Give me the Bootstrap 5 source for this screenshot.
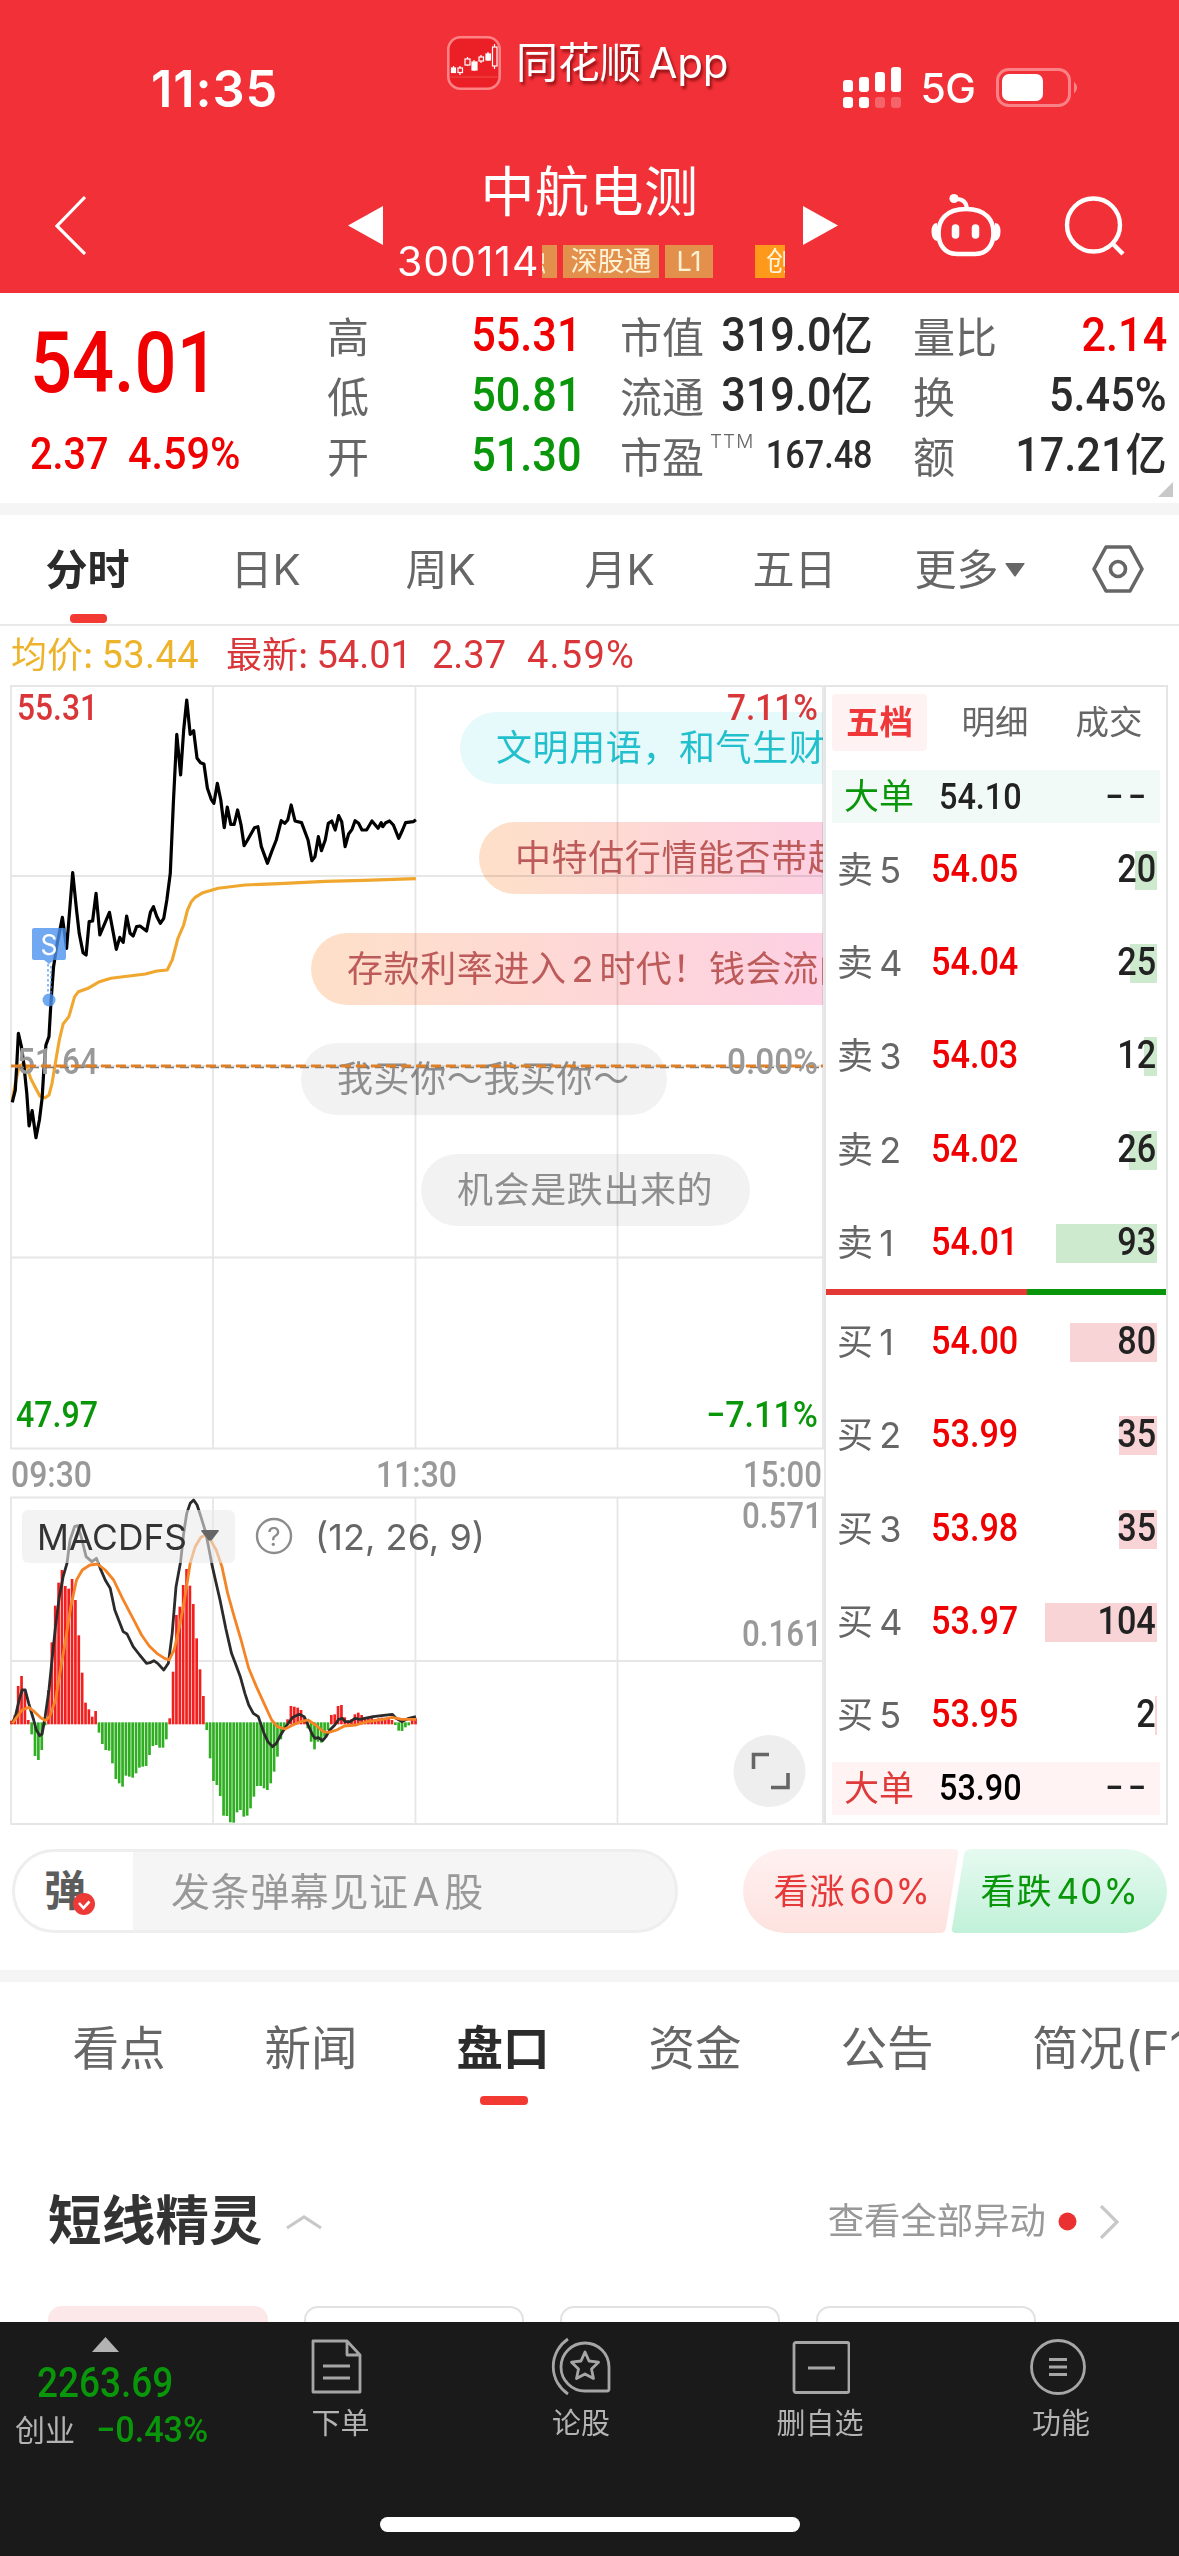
<!DOCTYPE html>
<html lang="zh-CN">
<head>
<meta charset="utf-8">
<meta name="viewport" content="width=device-width, initial-scale=1">
<title>中航电测 300114</title>
<link href="https://cdn.jsdelivr.net/npm/bootstrap@5.3.0/dist/css/bootstrap.min.css" rel="stylesheet">
<style>
:root{--up:#d9363a;--dn:#0a960a;--ink:#333;--sub:#666;--pale:#999}
body{width:1179px;height:2556px;overflow:hidden;background:#fff;color:var(--ink);font-family:Inter,"Noto Sans CJK SC",sans-serif;line-height:1}
svg{display:block;flex:none}
.num{font-family:Roboto,"Noto Sans CJK SC",sans-serif;font-weight:500;display:inline-block;transform:scaleX(.9);transform-origin:left center;white-space:nowrap}
.num.end{transform-origin:right center}
.c-up{color:#f00000}.c-dn{color:var(--dn)}.c-sub{color:var(--sub)}.c-ink{color:#2b2b2b}
.band{height:12px;background:#f5f5f5}

.topbar{height:293px;background:#f23037;color:#fff}
.status{height:164px}
.clock{margin:64px 0 0 151px;width:130px;font-size:50.5px;font-weight:600;letter-spacing:.9px}
.brand{margin:36px 0 0 166px;font-size:42px;text-shadow:2px 3px 3px rgba(90,0,0,.65);letter-spacing:-.2px}
.signal{margin:66px 0 0 117px}
.netw{margin:68px 0 0 17px;font-size:41px;width:58px;font-weight:500;letter-spacing:-.5px}
.batt{margin:67px 0 0 18px}
.navrow{height:122px;padding-left:55px}
.stockbox{width:385px;margin:0 18px 0 17px}
.stockname{font-size:54px;height:60px;line-height:58px;letter-spacing:.5px;margin-left:-6px}
.coderow{height:33px;margin-top:21px}
.code{font-size:41px;width:145px;margin-left:-3px;letter-spacing:.9px;white-space:nowrap}
.tagx{height:33px;line-height:33px;background:#e2904c;color:#fff3d6;font-size:27px;overflow:hidden;white-space:nowrap}

.quote{height:210px;position:relative}
.bigp{padding:34px 0 0 30px;width:329px}
.bigp .p1{font-size:86px;height:96px;line-height:72px;transform:scaleX(.86)}
.bigp .p2{font-size:44px;margin-top:9px;line-height:44px}
.qcol{padding-top:15px}
.qcol>div{height:60px;font-size:42px}
.qcol .num{font-size:48px;transform:translateY(-3px) scaleX(.9)}
.qcol .yi{font-size:42px;font-weight:500;transform:translateY(-3px) scale(.98,1.08);display:inline-block}

.ktabs{height:111px;border-bottom:2px solid #e9e9e9;font-size:42px;color:var(--sub);position:relative}
.ktabs>span{width:175px;flex:none;height:109px;line-height:109px}
.ktabs .on,.ntabs .on{color:#2b2b2b;font-weight:700}
.uline{position:absolute;height:9px;border-radius:4px;background:#f23a33}

.info{height:59px;font-size:36px;padding:0 0 1px 11px;color:var(--up)}
.info .num{font-size:38px;font-weight:400;transform:none}
.board{height:1140px}
.plot{width:824px;position:relative}
.bullet{position:absolute;height:72px;line-height:73px;border-radius:36px 0 0 36px;font-size:36px;letter-spacing:.6px;white-space:nowrap;overflow:hidden;padding-left:36px;mix-blend-mode:multiply}
.warm{background:linear-gradient(90deg,#fee0c8,#fdd0e3);color:#bd5b5b}
.gray{background:#f2f2f2;color:#8e8e8e;border-radius:36px}

.book{width:344px;border:2px solid #e5e5e5}
.btabs{height:83px;padding:7px 0 0 6px;font-size:33.5px;color:var(--sub)}
.btabs>span{width:115px;height:57px;line-height:57px;text-align:center}
.btabs .on{width:96px;background:#fef2f2;color:#f0383a;font-weight:700;border-radius:4px}
.big{height:53px;margin:0 6px;padding:0 15px 0 12px;font-size:35px}
.big .num{font-size:36px;color:#222}
.lv{height:93.3px;padding:0 10px 0 11px;font-size:36px;color:var(--sub);position:relative}
.lv .tag2{width:94px;word-spacing:-4px}
.lv .num{font-size:38px;position:relative;top:-1px}
.lv .qty{color:#222}
.lv i{position:absolute;right:9px;top:calc(50% - 19px);height:39px;background:#cde9ce}
.lv.buy i{background:#f8d4d7}
.split{height:6px}

.comment{height:145px;padding:24px 12px 0}
.sendbox{width:667px;height:84px;border:3px solid #eee;border-radius:42px;background:#f5f5f5;overflow:hidden;font-size:39px;color:var(--pale)}
.dan{width:118px;height:78px;background:#fff;color:#5c5c5c;font-weight:700;font-size:42px;position:relative;padding-left:29px}
.dan svg{position:absolute;left:57px;top:40px}
.vote{width:424px;height:84px;position:relative;margin-left:65px;font-size:35px}
.vote svg{position:absolute;left:0;top:0}
.vote span{position:relative;white-space:nowrap;letter-spacing:1.1px}

.ntabs{height:140px;font-size:46.5px;color:var(--sub);position:relative;padding-left:23px}
.ntabs>span{width:192px;flex:none;height:132px;line-height:132px;text-align:center;white-space:nowrap}
.sect{height:184px;padding:15px 60px 0 48px}
.sect h2{font-size:53.5px;font-weight:700;margin:0;letter-spacing:.2px}
.more{font-size:36.4px;color:var(--pale)}
.tiles{height:16px;padding-left:48px;gap:36px;overflow:hidden}
.tile{width:220px;height:80px;border:2px solid #e2e2e2;border-radius:14px}
.tile.on{background:#fce8e9;border-color:#fce8e9}

.dock{height:234px;background:#1a1a1a;color:#b3b3b3;position:relative}
.idx{width:240px;padding-top:15px}
.cell{width:240px;height:130px;font-size:29px;position:absolute;top:0;padding-top:14px}
.cell svg{height:60px}
.cell span{margin-top:13px}
.homebar{position:absolute;left:380px;top:195px;width:420px;height:15px;border-radius:8px;background:#fff}
</style>
</head>
<body>
<header class="topbar">
  <div class="status d-flex align-items-start">
    <div class="clock">11:35</div>
    <div class="brand d-flex align-items-center">
      <svg width="54" height="54" viewBox="0 0 54 54"><rect x="1.3" y="1.3" width="51.4" height="51.4" rx="12" fill="#ea2026" stroke="#ff8285" stroke-width="2.6"/><path d="M3 41h48" stroke="#f4484b" stroke-width="1"/><g stroke="#fff" stroke-width="1.2" fill="none"><path d="M6.500 30v7M13 30v9M20.500 21v9M27 24v11M34 19v8M41 16v9M47.500 8v25"/><g fill="#fff"><rect x="4.500" y="32" width="4" height="4.500"/><rect x="25" y="26" width="5" height="8"/><rect x="39" y="18" width="4.500" height="6"/></g><g fill="#ea2026"><rect x="11" y="32" width="4.500" height="4.500"/><rect x="18" y="23" width="5" height="6"/><rect x="32" y="21" width="4.500" height="4"/><rect x="45.500" y="11" width="4.500" height="19"/></g></g></svg>
      <span style="margin-left:15px">同花顺</span><span style="margin-left:7px;width:78px">App</span>
    </div>
    <svg class="signal" width="60" height="42" viewBox="0 0 60 42" fill="#fff"><rect x="0" y="14" width="10" height="12" rx="3"/><rect x="16" y="11" width="10" height="15" rx="3"/><rect x="32" y="6" width="10" height="20" rx="3"/><rect x="48" y="1" width="10" height="25" rx="3"/><rect x="0" y="31" width="10" height="11" rx="3"/><rect x="16" y="31" width="10" height="11" rx="3"/><rect x="32" y="31" width="10" height="11" rx="3" opacity=".25"/><rect x="48" y="31" width="10" height="11" rx="3" opacity=".25"/></svg>
    <div class="netw">5G</div>
    <svg class="batt" width="84" height="41" viewBox="0 0 84 41"><rect x="1.500" y="2.500" width="72" height="36" rx="11" fill="none" stroke="#f98286" stroke-width="3"/><rect x="6" y="7" width="41" height="27" rx="7" fill="#fff"/><path d="M78 14.500q6 6 0 12z" fill="#f98286"/></svg>
  </div>
  <div class="navrow d-flex align-items-center">
    <svg width="31" height="60" viewBox="0 0 31 60"><path d="M30 2L2 31l28 28" fill="none" stroke="#fff" stroke-width="3.200"/></svg>
    <svg style="margin-left:262px" width="35" height="39" viewBox="0 0 35 39"><path d="M0 19.500L35 0v39z" fill="#fff"/></svg>
    <div class="stockbox align-self-start">
      <div class="stockname text-center">中航电测</div>
      <div class="coderow d-flex align-items-center">
        <span class="code">300114</span>
        <span class="tagx" style="width:15px;text-indent:-23px">融</span>
        <span class="tagx text-center" style="width:96px;margin-left:6px">深股通</span>
        <span class="tagx text-center" style="width:48px;margin-left:6px">L1</span>
        <span class="tagx" style="width:30px;margin-left:42px;padding-left:11px;background:#ff991b">创</span>
      </div>
    </div>
    <svg width="35" height="39" viewBox="0 0 35 39"><path d="M35 19.500L0 0v39z" fill="#fff"/></svg>
    <svg style="margin-left:93px" width="70" height="66" viewBox="0 0 70 66" fill="none" stroke="#fff" stroke-width="4.600"><path d="M35 17C14 17 7.500 29 7.500 41S14 62 26 62h18c12 0 18.500-9 18.500-21S56 17 35 17z"/><path d="M25 7c8 0 11 4 11 11" stroke-width="4"/><circle cx="23" cy="6.500" r="4.600" fill="#fff" stroke="none"/><path d="M6 31q-5.500 0-5.500 8.500T6 49zM64 31q5.500 0 5.500 8.500T64 49z" fill="#fff" stroke="none"/><path d="M24.500 36v7M44.500 36v7" stroke-width="7.500" stroke-linecap="round"/></svg>
    <svg style="margin-left:63px" width="62" height="62" viewBox="0 0 62 62" fill="none" stroke="#fff" stroke-width="4.400"><circle cx="29.500" cy="31" r="26.500"/><path d="M48 49l11 11"/></svg>
  </div>
</header>

<section class="quote d-flex">
  <div class="bigp c-up">
    <div class="num p1">54.01</div>
    <div class="p2 d-flex"><span class="num" style="width:98px">2.37</span><span class="num" style="transform:scaleX(.94)">4.59%</span></div>
  </div>
  <div class="qcol c-sub" style="width:254px;margin-left:-2px">
    <div class="d-flex justify-content-between align-items-center">高<span class="num end c-up">55.31</span></div>
    <div class="d-flex justify-content-between align-items-center">低<span class="num end c-dn">50.81</span></div>
    <div class="d-flex justify-content-between align-items-center">开<span class="num end c-dn">51.30</span></div>
  </div>
  <div class="qcol c-sub" style="width:253px;margin-left:39px">
    <div class="d-flex justify-content-between align-items-center">市值<span class="c-ink d-flex align-items-center"><span class="num end">319.0</span><span class="yi">亿</span></span></div>
    <div class="d-flex justify-content-between align-items-center">流通<span class="c-ink d-flex align-items-center"><span class="num end">319.0</span><span class="yi">亿</span></span></div>
    <div class="d-flex justify-content-between align-items-center"><span>市盈</span><span class="align-self-start me-auto" style="font-size:19px;margin:4px 0 0 6px;font-weight:300;letter-spacing:1px">TTM</span><span class="num end c-ink" style="font-size:38px">167.48</span></div>
  </div>
  <div class="qcol c-sub" style="width:254px;margin-left:40px">
    <div class="d-flex justify-content-between align-items-center">量比<span class="num end c-up">2.14</span></div>
    <div class="d-flex justify-content-between align-items-center">换<span class="num end c-ink">5.45%</span></div>
    <div class="d-flex justify-content-between align-items-center">额<span class="c-ink d-flex align-items-center"><span class="num end">17.21</span><span class="yi">亿</span></span></div>
  </div>
  <svg class="position-absolute" style="right:6px;bottom:6px" width="15" height="15"><path d="M15 0v15H0z" fill="#c8c8c8"/></svg>
</section>
<div class="band"></div>

<nav class="ktabs d-flex">
  <span class="on text-center">分时</span>
  <span class="text-center" style="margin-left:3px">日K</span>
  <span class="text-center">周K</span>
  <span class="text-center" style="margin-left:4px">月K</span>
  <span class="text-center">五日</span>
  <span class="d-flex align-items-center justify-content-center">更多<svg style="margin-left:6px" width="20" height="14"><path d="M1 0h18q1 0 .5 1L10.500 13.500h-1L.5 1Q0 0 1 0z" fill="#666"/></svg></span>
  <svg style="margin:30px 0 0 35px" width="52" height="48" viewBox="0 0 52 48" fill="none" stroke="#666" stroke-width="3.600" stroke-linejoin="round"><path d="M14 2h24l12 22-12 22H14L2 24z"/><circle cx="26" cy="24" r="7.500"/></svg>
  <div class="uline" style="left:70px;bottom:1px;width:37px"></div>
</nav>

<div class="info d-flex align-items-center">
  <span style="color:#edb32a;width:215px">均价: <span class="num" style="margin-left:-2px;letter-spacing:.4px">53.44</span></span>
  <span>最新: <span class="num" style="margin-left:-2px">54.01</span></span>
  <span class="num" style="margin-left:20px">2.37</span>
  <span class="num" style="margin-left:21px;letter-spacing:1.2px">4.59%</span>
</div>

<main class="board d-flex">
  <div class="plot">
    <svg width="824" height="1140" viewBox="0 685 824 1140" font-family="Roboto" font-weight="500" font-size="36">
      <g stroke="#e6e6e6" stroke-width="1.800" fill="none">
        <path d="M11 686H823V1448.500H11zM11 876H823M11 1066H823M11 1257.500H823M213 686V1448M415.500 686V1448M617.500 686V1448"/>
        <path d="M11 1497.500H823V1824H11zM11 1661H823M213 1498V1824M415.500 1498V1824M617.500 1498V1824"/>
      </g>
      <g transform="translate(0 670) scale(.38265 .33333)" fill="none" stroke-linejoin="round">
        <polyline vector-effect="non-scaling-stroke" stroke="#f0a72f" stroke-width="3.100" points="32,1290 40,1240 50,1190 62,1180 72,1195 80,1225 92,1252 104,1278 118,1283 128,1275 136,1240 146,1170 155,1110 165,1062 180,1040 195,980 205,965 230,955 260,935 290,925 380,912 410,903 437,900 450,870 465,805 480,765 490,720 500,695 510,682 530,668 570,655 640,645 730,641 850,634 950,631 1087,626"/>
        <polyline vector-effect="non-scaling-stroke" stroke="#000" stroke-width="3.200" points="32,1297 40,1260 44,1180 48,1090 56,1130 62,1180 70,1270 76,1368 84,1322 94,1403 103,1350 110,1285 114,1210 120,1125 128,1100 133,1000 140,890 148,830 163,742 174,835 190,608 200,720 207,790 217,848 225,855 233,755 242,753 251,670 261,795 286,727 304,838 313,802 322,817 331,738 340,790 348,798 357,770 366,768 383,783 393,727 401,710 410,740 419,760 428,745 436,690 445,610 453,400 462,193 472,315 480,180 488,90 497,193 506,182 515,265 524,278 533,282 542,355 552,388 559,400 568,340 577,390 586,473 594,411 603,463 612,463 621,420 630,465 638,527 647,510 665,473 674,470 683,530 699,580 710,545 722,510 735,452 744,460 752,450 761,405 771,453 788,458 805,510 815,572 823,560 832,500 840,542 850,510 858,460 867,453 876,480 885,437 893,455 902,530 911,492 920,478 928,452 937,460 946,480 958,480 972,453 988,475 996,458 1000,470 1008,458 1018,453 1028,465 1042,505 1052,480 1060,458 1080,455 1087,449"/>
      </g>
      <g fill="#4d94ee" opacity=".8"><path d="M34 928h30q2 0 2 2v28q0 2-2 2H54l-5 4-5-4H34q-2 0-2-2v-28q0-2 2-2z"/><circle cx="49" cy="1000" r="6.500"/><path d="M48 964v30M51 966v28" stroke="#4d94ee" stroke-width="1.600" stroke-dasharray="2.500 2.500"/></g>
      <text x="40.500" y="955" font-size="28" fill="#fff" font-family="Inter" font-weight="400" textLength="17" lengthAdjust="spacingAndGlyphs">S</text>
      <text x="17" y="720" fill="#d9363a" textLength="81" lengthAdjust="spacingAndGlyphs">55.31</text>
      <text x="17" y="1073.500" fill="#999" textLength="81" lengthAdjust="spacingAndGlyphs">51.64</text>
      <text x="16" y="1427" fill="#0a960a" textLength="82" lengthAdjust="spacingAndGlyphs">47.97</text>
      <text x="706" y="1427" fill="#0a960a" textLength="112" lengthAdjust="spacingAndGlyphs">−7.11%</text>
      <g fill="#999">
        <text x="11" y="1487" textLength="81" lengthAdjust="spacingAndGlyphs">09:30</text>
        <text x="376" y="1487" textLength="81" lengthAdjust="spacingAndGlyphs">11:30</text>
        <text x="743" y="1487" textLength="79" lengthAdjust="spacingAndGlyphs">15:00</text>
        <text x="742" y="1528" textLength="80" lengthAdjust="spacingAndGlyphs">0.571</text>
        <text x="742" y="1646" textLength="80" lengthAdjust="spacingAndGlyphs">0.161</text>
      </g>
      <g id="bars" transform="translate(0 1380) scale(.38265 .33333)"></g>
      <g transform="translate(0 1380) scale(.38265 .33333)" fill="none" stroke-width="2.800" stroke-linejoin="round">
        <polyline vector-effect="non-scaling-stroke" stroke="#2b2b2b" points="32,1030 40,1010 50,960 58,930 66,930 75,970 88,1020 95,1050 104,1067 110,1062 118,1010 128,930 135,850 145,740 155,650 165,590 175,550 183,480 195,440 203,437 212,470 225,530 240,545 252,535 262,565 275,600 288,625 300,690 322,755 332,762 348,800 365,825 383,850 392,848 402,842 412,850 428,870 440,850 450,760 460,620 472,545 480,460 488,400 497,370 506,360 515,375 525,410 537,455 545,500 555,560 565,610 575,660 590,745 605,820 615,850 628,890 640,940 650,975 662,1000 675,1010 690,1060 700,1085 712,1100 722,1090 735,1062 750,1035 765,1012 782,1003 795,1010 805,1035 817,1065 823,1075 832,1073 843,1082 852,1070 862,1050 875,1035 885,1018 895,1015 902,1025 915,1025 928,1015 940,1018 975,1010 1025,1003 1035,1015 1050,1025 1068,1015 1087,1010"/>
        <polyline vector-effect="non-scaling-stroke" stroke="#f58426" points="32,1030 45,1010 58,990 75,982 90,995 105,1012 118,1022 130,1010 145,960 158,870 170,790 185,680 200,600 215,570 235,555 255,552 275,570 297,600 320,655 345,710 370,765 390,798 410,820 430,835 442,840 455,810 470,735 485,640 497,550 510,500 525,472 537,465 550,480 565,510 580,560 595,640 612,710 630,780 650,865 670,920 690,970 710,1020 725,1040 745,1047 765,1035 785,1025 805,1020 825,1035 845,1055 860,1057 880,1050 900,1038 930,1035 960,1025 1000,1018 1025,1012 1050,1018 1087,1018"/>
      </g>
      <rect x="22" y="1510" width="213" height="53" rx="6" fill="#ebebeb" opacity=".58"/>
      <g font-family="Inter" font-weight="400">
        <text x="37" y="1550" fill="#333" textLength="150" lengthAdjust="spacingAndGlyphs">MACDFS</text>
        <path d="M202 1530h16q1.500 0 .5 1.500l-7 9h-3l-7-9q-1-1.500.5-1.500z" fill="#666"/>
        <circle cx="274" cy="1536" r="17" fill="none" stroke="#8c8c8c" stroke-width="2.400"/>
        <text x="274" y="1545.500" font-size="26" fill="#8c8c8c" text-anchor="middle">?</text>
        <text x="315" y="1550" fill="#666" textLength="170" lengthAdjust="spacing">(12, 26, 9)</text>
      </g>
      <circle cx="769.500" cy="1771" r="36" fill="#eee"/>
      <path d="M753.500 1769V1754.500H769M788 1773V1787.500H771" fill="none" stroke="#666" stroke-width="3.600"/>
    </svg>
    <div class="bullet" style="left:460px;top:27px;width:363px;background:#e6f9fb;color:#22c0cc">文明用语，和气生财</div>
    <div class="bullet warm" style="left:479px;top:137px;width:344px">中特估行情能否带起</div>
    <div class="bullet warm" style="left:311px;top:248px;width:512px">存款利率进入<span style="margin:0 5px">2</span>时代！钱会流向</div>
    <div class="bullet gray" style="left:301px;top:358px;width:366px">我买你～我买你～</div>
    <div class="bullet gray" style="left:421px;top:469px;width:329px">机会是跌出来的</div>
    <svg class="position-absolute top-0 start-0" width="824" height="400" viewBox="0 685 824 400" font-family="Roboto" font-weight="500" font-size="36">
      <text x="727" y="720" fill="#d9363a" textLength="91" lengthAdjust="spacingAndGlyphs">7.11%</text>
      <path d="M11 1067.500H823" stroke="#777" stroke-width="1.600" stroke-dasharray="9 6" stroke-dashoffset="-4"/>
      <path d="M11 1066H823" stroke="#e07f24" stroke-width="2.800" stroke-dasharray="10 5"/>
      <text x="727" y="1073.500" fill="#999" textLength="91" lengthAdjust="spacingAndGlyphs">0.00%</text>
    </svg>
  </div>

  <aside class="book">
    <div class="btabs d-flex"><span class="on">五档</span><span style="margin-left:11px">明细</span><span>成交</span></div>
    <div class="big d-flex align-items-center c-dn" style="background:#f1faf6">大单<span class="num" style="margin-left:25px">54.10</span><span class="num end ms-auto" style="letter-spacing:5px;margin-right:-5px">−−</span></div>
    <div class="lv d-flex align-items-center"><span class="tag2">卖 5</span><span class="num c-up">54.05</span><i style="width:22px"></i><span class="num end qty ms-auto">20</span></div>
    <div class="lv d-flex align-items-center"><span class="tag2">卖 4</span><span class="num c-up">54.04</span><i style="width:27px"></i><span class="num end qty ms-auto">25</span></div>
    <div class="lv d-flex align-items-center"><span class="tag2">卖 3</span><span class="num c-up">54.03</span><i style="width:13px"></i><span class="num end qty ms-auto">12</span></div>
    <div class="lv d-flex align-items-center"><span class="tag2">卖 2</span><span class="num c-up">54.02</span><i style="width:28px"></i><span class="num end qty ms-auto">26</span></div>
    <div class="lv d-flex align-items-center"><span class="tag2">卖 1</span><span class="num c-up">54.01</span><i style="width:101px"></i><span class="num end qty ms-auto">93</span></div>
    <div class="split d-flex"><div style="width:59.2%;background:#e33a38"></div><div class="flex-fill" style="background:#0a960a"></div></div>
    <div class="lv buy d-flex align-items-center"><span class="tag2">买 1</span><span class="num c-up">54.00</span><i style="width:87px"></i><span class="num end qty ms-auto">80</span></div>
    <div class="lv buy d-flex align-items-center"><span class="tag2">买 2</span><span class="num c-up">53.99</span><i style="width:38px"></i><span class="num end qty ms-auto">35</span></div>
    <div class="lv buy d-flex align-items-center"><span class="tag2">买 3</span><span class="num c-up">53.98</span><i style="width:38px"></i><span class="num end qty ms-auto">35</span></div>
    <div class="lv buy d-flex align-items-center"><span class="tag2">买 4</span><span class="num c-up">53.97</span><i style="width:112px"></i><span class="num end qty ms-auto">104</span></div>
    <div class="lv buy d-flex align-items-center"><span class="tag2">买 5</span><span class="num c-up">53.95</span><i style="width:2px"></i><span class="num end qty ms-auto">2</span></div>
    <div class="big d-flex align-items-center" style="background:#fff3f3;color:#e03b3b">大单<span class="num" style="margin-left:25px;color:#000">53.90</span><span class="num end ms-auto" style="letter-spacing:5px;margin-right:-5px">−−</span></div>
  </aside>
</main>

<div class="comment d-flex">
  <div class="sendbox d-flex align-items-center">
    <div class="dan d-flex align-items-center">弹<svg width="24" height="24" viewBox="0 0 24 24"><circle cx="12" cy="12" r="11" fill="#ee3a36"/><path d="M7 11l4.500 5 6-6.500" fill="none" stroke="#fff" stroke-width="2.600"/></svg></div>
    <span style="margin-left:38px;letter-spacing:.6px">发条弹幕见证<span class="mx-1">A</span>股</span>
  </div>
  <div class="vote d-flex align-items-center">
    <svg width="424" height="84" viewBox="0 0 424 84"><defs><linearGradient id="gr" x2="0" y2="1"><stop stop-color="#fff1f1"/><stop offset="1" stop-color="#fde2df"/></linearGradient><linearGradient id="gg" x2="0" y2="1"><stop stop-color="#e6faf0"/><stop offset="1" stop-color="#c1f1d9"/></linearGradient></defs><path d="M42 0H211q5 0 4 5L203 79q-1 5-6 5H42A42 42 0 0 1 42 0z" fill="url(#gr)"/><path d="M229 0H382a42 42 0 0 1 0 84H213q-5 0-4-5L221 6q1-6 8-6z" fill="url(#gg)"/></svg>
    <span style="margin-left:30px;color:#e5393a;width:207px">看涨<span class="ms-1">60%</span></span><span class="c-dn">看跌<span class="ms-1">40%</span></span>
  </div>
</div>
<div class="band"></div>

<nav class="ntabs d-flex overflow-hidden">
  <span>看点</span><span>新闻</span><span class="on">盘口</span><span>资金</span><span>公告</span><span class="text-start" style="padding-left:49px">简况(F10)</span>
  <div class="uline" style="left:480px;top:114px;width:48px"></div>
</nav>
<section class="sect d-flex align-items-center">
  <h2>短线精灵</h2>
  <svg style="margin-left:23px" width="36" height="16" viewBox="0 0 36 16"><path d="M1 14L18 3l17 11" fill="none" stroke="#c8c8c8" stroke-width="3.200"/></svg>
  <span class="more ms-auto">查看全部异动</span>
  <svg style="margin-left:12px" width="19" height="19"><circle cx="9.500" cy="9.500" r="9" fill="#ea3030"/></svg>
  <svg style="margin-left:22px" width="20" height="34" viewBox="0 0 20 34"><path d="M2 1l16 16L2 33" fill="none" stroke="#c8c8c8" stroke-width="3.200"/></svg>
</section>
<div class="tiles d-flex"><div class="tile on"></div><div class="tile"></div><div class="tile"></div><div class="tile"></div></div>

<footer class="dock">
  <div class="idx">
    <svg style="margin-left:92px" width="27" height="15"><path d="M13.500 0L27 15H0z" fill="#b3b3b3"/></svg>
    <div class="c-dn" style="font-size:43px;padding:8px 0 0 37px"><span class="num" style="transform:scaleX(.86)">2263.69</span></div>
    <div class="d-flex align-items-center" style="font-size:30px;padding:8px 0 0 15px">创业<span class="num c-dn" style="font-size:36px;margin-left:21px;transform:scaleX(.95)">−0.43%</span></div>
  </div>
  <div class="cell d-flex flex-column align-items-center" style="left:218px"><svg width="56" viewBox="0 0 56 60" fill="none" stroke="#a6a6a6" stroke-width="2.800" stroke-linejoin="round"><path d="M3 5h34l13 14v37H3zM37 5v14h13"/><path d="M13 30h27M13 42h27" stroke-width="3"/></svg><span style="margin-left:5px">下单</span></div>
  <div class="cell d-flex flex-column align-items-center" style="left:461px"><svg width="64" viewBox="0 0 64 60" fill="none" stroke="#a6a6a6" stroke-width="2.800" stroke-linejoin="round"><path d="M36 7a24 24 0 0 0 0 48h22q2 0 2-2V31A24 24 0 0 0 36 7z"/><path d="M19 3A33 33 0 0 0 19 58"/><path d="M36 16l4 9 9.500 1.200-7 6.800 2 9.500-8.500-4.500-8.500 4.500 2-9.500-7-6.800L32 25z"/></svg><span>论股</span></div>
  <div class="cell d-flex flex-column align-items-center" style="left:700px"><svg width="60" viewBox="0 0 60 60" fill="none" stroke="#a6a6a6" stroke-width="2.800"><rect x="4" y="6.500" width="55" height="50" rx="2"/><path d="M18 32h27" stroke-width="3"/></svg><span>删自选</span></div>
  <div class="cell d-flex flex-column align-items-center" style="left:940px"><svg width="60" viewBox="0 0 60 60" fill="none" stroke="#a6a6a6" stroke-width="2.800"><circle cx="28" cy="31" r="26.500"/><path d="M19 23.500h18M19 31h18M19 38.500h18" stroke-width="3"/></svg><span style="margin-left:2px">功能</span></div>
  <div class="homebar"></div>
</footer>

<script>
/* MACD histogram: one end value per minute; values below the base line are green */
const base = 1030;
const ends = [1022,1005,918,888,935,1020,1063,1128,1140,1110,1036,930,787,677,608,570,618,626,597,660,766,878,968,988,1010,993,1058,1092,1110,1112,1150,1197,1210,1220,1187,1190,1193,1180,1163,1160,1158,1125,1098,1095,1103,1103,1078,1015,875,705,680,615,567,617,672,775,868,948,1050,1135,1203,1215,1248,1307,1308,1327,1328,1297,1290,1310,1307,1285,1250,1218,1218,1225,1230,1210,1175,1130,1078,1045,1018,978,980,983,990,1012,1045,1085,1108,1085,1088,1070,1050,1005,1003,978,975,1012,1022,1018,1003,998,1005,1012,1015,1013,1018,1015,1013,1015,1016,1020,1035,1052,1053,1042,1036,1018,1015];
document.getElementById('bars').innerHTML = ends.map((v, i) => {
  const up = v < base, y = up ? v : base - 3, h = up ? base + 3 - v : v - base + 3;
  return `<rect x="${(26.4 + 8.8 * i).toFixed(1)}" y="${y}" width="7" height="${h}" fill="${up ? '#f21f1f' : '#2fae22'}"/>`;
}).join('');
</script>
<script src="https://cdn.jsdelivr.net/npm/bootstrap@5.3.0/dist/js/bootstrap.bundle.min.js"></script>
</body>
</html>
